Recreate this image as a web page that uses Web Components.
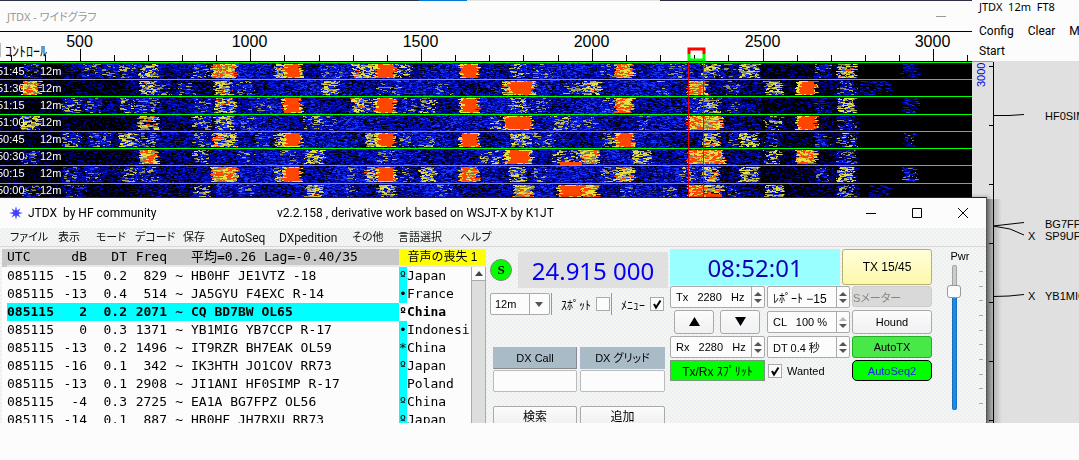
<!DOCTYPE html>
<html lang="ja">
<head>
<meta charset="utf-8">
<title>JTDX</title>
<style>
html, body { margin: 0; background: #fcfcfc; }
body { font-family: "Liberation Sans", "Noto Sans CJK JP", sans-serif; font-size: 12px; color: #000; overflow: hidden; }
</style>
</head>
<body>
<jtdx-desktop>
  <wide-graph></wide-graph>
  <band-map></band-map>
  <main-window>
    <decode-list></decode-list>
    <rig-panel></rig-panel>
    <tx-panel></tx-panel>
    <power-slider></power-slider>
  </main-window>
</jtdx-desktop>

<script>
function define(name, html, ready) {
  const t = document.createElement('template');
  t.innerHTML = html;
  customElements.define(name, class extends HTMLElement {
    constructor() {
      super();
      this.attachShadow({ mode: 'open' }).append(t.content.cloneNode(true));
    }
    connectedCallback() { if (ready) ready(this, this.shadowRoot); }
  });
}

define('jtdx-desktop', `
<style>
:host { display: grid; grid-template-columns: minmax(0, 1fr) 107px; grid-template-rows: 423px; overflow: hidden; }
::slotted(wide-graph) { grid-area: 1 / 1; }
::slotted(band-map) { grid-area: 1 / 2; }
::slotted(main-window) { grid-area: 1 / 1 / 2 / 3; margin: 197px 92px 0 0; z-index: 1; }
</style><slot></slot>`);

/* ---------- wide graph: title, frequency scale, waterfall ---------- */
define('wide-graph', `
<style>
:host { display: block; background: #fcfcfc; overflow: hidden; }
.edge { height: 1px; background: linear-gradient(90deg, #2b3446 419px, #0078d7 419px 467px, #dde5dd 467px 660px, #2d2d48 660px); }
header { display: flex; justify-content: space-between; align-items: center; height: 30px; padding: 0 26px 0 7px; color: #999;
  font: 11px "Noto Sans", "Noto Sans CJK JP", sans-serif; font-feature-settings: "palt"; }
header i { width: 10px; height: 1px; background: #999; }
.scale { position: relative; border-top: 1px solid #000; height: 29px; }
svg { display: block; overflow: hidden; }
button { position: absolute; left: 0; bottom: 4px; border: 0; border-left: 1px solid #bbb; background: none; padding: 0 0 0 4px; font: 14px/14px "Noto Sans CJK JP", sans-serif; color: #000; }
.fall { position: relative; }
canvas { display: block; width: 100%; height: 137px; image-rendering: pixelated; }
ol { position: absolute; inset: 1px 0 0 0; margin: 0; padding: 0; list-style: none; display: grid; grid-template-rows: repeat(8, 17px); color: #fff; overflow: hidden; }
li { display: flex; align-items: center; gap: 15px; font-size: 11px; margin-left: -3px; }
li time { width: 28px; }
</style>
<div class="edge"></div>
<header><span>JTDX - ワイドグラフ</span><i></i></header>
<div class="scale"><button>ｺﾝﾄﾛｰﾙ</button><svg width="972" height="29" viewBox="0 0 972 29" font-size="16" text-anchor="middle"></svg></div>
<div class="fall"><canvas width="972" height="137"></canvas><ol></ol></div>`, (host, root) => {
  const svg = root.querySelector('svg');
  let s = '';
  for (let i = -2; i <= 26; i++) {
    const x = Math.floor(80 + i * 34.15) + 0.5;
    const major = i % 5 === 0;
    s += `<path d="M${x} ${major ? 17 : 23}V29" stroke="#000"/>`;
    if (major) s += `<text x="${x - 1}" y="15">${500 + i * 100}</text>`;
  }
  s += '<path d="M689 22V17H704V22" fill="none" stroke="red" stroke-width="3"/><path d="M689 22V28H704V22" fill="none" stroke="#0f0" stroke-width="3"/>';
  svg.innerHTML = s;
  root.querySelector('ol').innerHTML = ['51:45', '51:30', '51:15', '51:00', '50:45', '50:30', '50:15', '50:00']
    .map(t => `<li><time>${t}</time><span>12m</span></li>`).join('');

  const bands = [
    [25,40,2.6, 83,118,2.8, 120,135,3, 140,157,3.9, 192,208,3.1, 212,236,4.7, 275,283,4, 283,301,6, 323,340,2.8, 352,362,4.3, 360,375,3.7, 375,395,6, 395,410,3.5, 460,478,6, 510,527,3.4, 533,550,2.9, 602,615,3.1, 615,633,5.1, 670,690,2.8, 703,719,3.8, 722,735,2.8, 740,758,3.9, 815,830,2.4, 838,855,4.3, 902,918,1.8],
    [22,40,4.9, 140,157,4, 155,170,3, 178,193,2.9, 214,232,4.2, 238,253,3.1, 322,338,3.9, 378,400,2.8, 435,450,2.8, 503,535,4.2, 508,533,6, 563,580,3.1, 582,600,4.1, 657,670,2.8, 688,706,4.8, 725,740,2.5, 765,782,3.9, 797,816,6, 838,855,2.8, 860,890,1.6],
    [62,80,3.2, 85,100,2.8, 120,133,3.4, 135,157,2.8, 195,208,2.8, 215,235,4.1, 250,270,2.8, 283,301,6, 352,362,4.3, 362,375,3.5, 375,395,6, 405,415,2.8, 420,435,3.4, 460,478,6, 510,528,3.4, 533,550,2.8, 602,615,3, 615,633,5.1, 690,703,3, 703,719,3.9, 728,740,2.5, 815,830,2, 838,855,3.9, 902,918,2],
    [22,40,3.9, 138,157,4.4, 193,210,3.2, 215,232,3.6, 240,255,2.8, 305,323,3.3, 322,335,2.6, 490,505,3.4, 504,532,5.9, 552,570,3.4, 570,580,2.8, 583,597,3, 638,648,2.8, 688,706,5, 703,722,4.5, 765,782,3.3, 797,816,6, 838,855,2.5],
    [63,80,3.2, 90,112,2.9, 120,136,3.6, 140,157,3.1, 193,208,3, 212,236,4.3, 255,270,2.7, 275,283,4, 283,301,6, 366,378,4.2, 376,395,6, 400,412,3, 420,435,3.2, 460,478,6, 511,530,3.7, 533,553,3, 603,615,3.2, 615,633,5.7, 703,719,4.2, 728,740,2.5, 740,758,3.9, 765,780,2.4, 815,830,2.3, 838,855,3.2, 905,915,2.3],
    [22,38,2.8, 140,157,4.7, 193,207,3.5, 238,253,3, 280,296,2.8, 306,323,3.8, 378,395,3, 480,500,3.4, 504,532,4.2, 507,530,6, 552,582,3.5, 582,598,4.6, 633,650,3.9, 688,706,4.9, 703,724,4.9, 765,780,3.4, 797,816,5, 838,855,2.8],
    [65,80,2.9, 85,100,2.8, 122,136,3.5, 140,157,3, 212,237,4.8, 275,283,3.8, 283,301,5.6, 345,356,2.9, 366,376,4, 376,395,5.6, 400,412,2.9, 420,435,3.9, 460,478,4.8, 510,525,3.8, 533,548,2.9, 602,616,3.4, 615,633,4.2, 680,695,3.3, 703,718,4.2, 740,758,3.9, 815,830,2.6, 838,855,3.7, 903,916,2.4],
    [22,40,2.8, 65,85,2.6, 193,208,3.4, 240,255,2.7, 306,323,4.1, 345,355,2.7, 378,395,3.7, 435,450,2.9, 514,532,4.6, 558,582,6, 582,598,5.2, 620,632,3, 663,678,2.8, 688,706,5.2, 703,722,4.3, 728,738,2.6, 765,782,3.8, 838,855,3.1, 870,890,1.7]
  ];
  const lines = [1, 18, 35, 53, 70, 87, 104, 122, 137];
  const ctx = root.querySelector('canvas').getContext('2d');
  let seed = 20231;
  const rnd = () => (seed = (seed * 1664525 + 1013904223) >>> 0) / 4294967296;
  const colour = v => v < 1 ? '#000' : v < 1.7 ? '#000058' : v < 2.4 ? '#0008a4' : v < 3 ? '#0418d8' : v < 3.3 ? '#1c34f4' : v < 3.9 ? '#8c8c6c' : v < 4.3 ? '#c0bc54' : v < 5.1 ? '#e8e03c' : '#ff4600';
  ctx.fillRect(0, 0, 972, 137);
  bands.forEach((row, r) => {
    const odd = r % 2;
    for (let y = lines[r] + 1; y < lines[r + 1]; y++) {
      for (let x = 0; x < 972;) {
        const w = 1 + Math.floor(rnd() * 3);
        const base = x < 62 ? 0.4 : x < 130 ? (odd ? 0.6 : 1.4) : x < 215 ? (odd ? 1.3 : 1.7) : x < 710 ? 2 + 0.3 * Math.sin(x / 17 + r * 2) : x < 760 ? 1.4 : x < 835 ? 0.7 : x < 858 ? 1 : -0.4;
        ctx.fillStyle = colour(Math.min(base + (rnd() - 0.5) * 2.6, 3.2));
        ctx.fillRect(x, y, w, 1);
        x += w;
      }
      if (y === lines[r] + 1 || y === lines[r + 1] - 1) continue;
      const rim = y === lines[r] + 2 || y === lines[r + 1] - 2;
      for (let k = 0; k < row.length; k += 3) {
        const level = row[k + 2];
        const left = row[k], right = row[k + 1];
        const end = right + rnd() * 6 - 3;
        let x = left + Math.round(rnd() * 4 - 2);
        while (x < end) {
          const w = 1 + Math.floor(rnd() * 4);
          const edge = x < left + 2 || x > right - 3;
          let v = level + (rnd() - 0.5) * (level > 5.5 ? 1 : 2.4);
          if (level > 5.5 && (edge || rim) && rnd() < 0.6) v = 4.5;
          const keep = level < 2.5 ? 0.7 : level < 3.6 ? 0.62 : level < 4.5 ? 0.85 : 1;
          if (rnd() < keep) {
            ctx.fillStyle = colour(v);
            ctx.fillRect(x, y, Math.min(w, Math.max(1, end - x)), 1);
          }
          x += w;
        }
      }
    }
  });
  ctx.fillStyle = '#ff4600';
  ctx.fillRect(560, 101, 22, 3);
  ctx.fillRect(706, 133, 16, 4);
  ctx.fillStyle = '#00ff00';
  lines.slice(0, 8).forEach(y => ctx.fillRect(0, y, 972, 1));
  ctx.fillStyle = '#f00000';
  ctx.fillRect(688, 0, 1, 137);
  ctx.fillRect(703, 0, 1, 137);
});

/* ---------- band map ---------- */
define('band-map', `
<style>
:host { display: block; background: #e0e0e0; overflow: hidden; white-space: nowrap; }
header { background: #fcfcfc; height: 61px; padding-left: 7px; font: 12px Roboto, sans-serif; box-sizing: border-box; }
h1 { font: 11px/14px "Noto Sans", sans-serif; margin: 0; padding-bottom: 7px; white-space: pre; }
nav { line-height: 20px; }
nav a { color: inherit; text-decoration: none; margin-right: 14px; }
svg { display: block; }
</style>
<header><h1>JTDX  12m  FT8</h1><nav><a href="#">Config</a><a href="#">Clear</a><a href="#">Mode</a><br><a href="#">Start</a></nav></header>
<svg width="107" height="362" viewBox="0 0 107 362" font-size="11">
  <path d="M0 .5H21" stroke="#999"/>
  <defs><linearGradient id="g"><stop stop-color="#8c8c8c"/><stop offset="1" stop-color="#e0e0e0"/></linearGradient></defs>
  <rect x="14" y="138" width="16" height="224" fill="url(#g)"/>
  <path d="M21.500 1V362M17 5.500h4M17 64.500h4M17 123.500h4M17 182.500h4M17 241.500h4M17 300.500h4M17 359.500h4M21 54.500H37L52 53.500M21 165L52 161.500M21 165L38 168L52 174M21 235.500L37 235L52 233.500" fill="none" stroke="#000"/>
  <text transform="translate(13 26) rotate(-90)" fill="#0000e0">3000</text>
  <text x="73" y="59">HF0SIMP</text><text x="73" y="167">BG7FPZ</text>
  <text x="56" y="179">X</text><text x="73" y="179">SP9UF</text>
  <text x="56" y="239">X</text><text x="73" y="239">YB1MIG</text>
</svg>`);

/* ---------- main window frame ---------- */
define('main-window', `
<style>
:host { display: flex; flex-direction: column; border-top: 1px solid #222; border-right: 1px solid #555; box-shadow: 2px 0 4px #0005;
  background: #eff1f4 conic-gradient(#f5f6ee 25%, #eceff6 0 50%, #f5f6ee 0 75%, #eceff6 0) 0 0 / 4px 4px; }
header { display: flex; align-items: center; height: 30px; background: #fcfcfc; font: 12px Roboto, sans-serif; padding-left: 9px; }
.logo { margin-right: 5px; }
h1 { font: inherit; margin: 0; width: 249px; white-space: pre; }
.ctl { margin-left: auto; display: flex; gap: 22px; padding-right: 11px; }
.ctl button { width: 24px; height: 24px; padding: 0; border: 0; background: none; display: grid; place-items: center; }
nav { display: grid; grid-template-columns: 48px 38px 39px 48px 37px 59px 73px 46px 62px auto; height: 18px; padding: 1px 0 0 10px; box-sizing: border-box; border-bottom: 1px solid #d8d8d8; font: 11px/18px Roboto, "Noto Sans CJK JP", sans-serif; font-feature-settings: "palt"; white-space: nowrap; height: 19px; }
nav a { color: #111; text-decoration: none; }
nav .latin { font-size: 12px; }
main { display: grid; grid-template-columns: minmax(0, 1fr) 180px 262px 52px; column-gap: 2px; padding: 2px 0 0 2px; flex: 1; min-height: 0; }
</style>
<header>
  <svg class="logo" width="14" height="14" viewBox="0 0 14 14"><path d="M7 0L8 4.500L11.500 2.500L9.500 6L14 7L9.500 8L11.500 11.500L8 9.500L7 14L6 9.500L2.500 11.500L4.500 8L0 7L4.500 6L2.500 2.500L6 4.500Z" fill="#4040ff"/></svg>
  <h1>JTDX  by HF community</h1><span>v2.2.158 , derivative work based on WSJT-X by K1JT</span>
  <div class="ctl">
    <button aria-label="最小化"><svg width="12" height="12"><path d="M1 6.500H11" stroke="#000"/></svg></button>
    <button aria-label="最大化"><svg width="12" height="12"><path d="M1.500 1.500H10.500V10.500H1.500Z" fill="none" stroke="#000"/></svg></button>
    <button aria-label="閉じる"><svg width="12" height="12"><path d="M1 1L11 11M11 1L1 11" stroke="#000"/></svg></button>
  </div>
</header>
<nav><a href="#">ファイル</a><a href="#">表示</a><a href="#">モード</a><a href="#">デコード</a><a href="#">保存</a><a href="#" class="latin">AutoSeq</a><a href="#" class="latin">DXpedition</a><a href="#">その他</a><a href="#">言語選択</a><a href="#">ヘルプ</a></nav>
<main><slot></slot></main>`);

/* ---------- decode list ---------- */
define('decode-list', `
<style>
:host { display: block; position: relative; overflow: hidden; padding-left: 5px; background: #fcfcfc; height: 174px; }
table { width: 100%; table-layout: fixed; border-collapse: separate; border-spacing: 0; font: 13px/18px "DejaVu Sans Mono", "Noto Sans CJK JP", monospace; white-space: pre; }
th, td { padding: 0; text-align: right; }
th { font-weight: normal; line-height: 16px; height: 16px; background: #c8c8c8 padding-box; border-bottom: 2px solid #e8e8e8; }
th:first-child { text-align: left; box-shadow: -5px 0 #c8c8c8; }
td.m, th.m, td.c { text-align: left; }
td.f { background: #0ff; text-align: center; }
tr.hot td { background: #0ff; font-weight: bold; }
tr.hot td.f, tr.hot td.c { background: #fcfcfc; }
th.warn { background-color: #ff0; text-align: center; font-family: "Liberation Sans", "Noto Sans CJK JP", sans-serif; font-size: 12px; }
.bar { position: absolute; right: 0; top: 18px; bottom: 0; width: 13px; border: solid #aaa; border-width: 0 1px; background: #dcdedc; }
.bar button { display: grid; place-items: center; width: 13px; height: 14px; padding: 0; border: 0; border-bottom: 1px solid #aaa; background: #fcfcfc; }
</style>
<table>
<colgroup><col style="width:47px"><col style="width:33px"><col style="width:40px"><col style="width:40px"><col style="width:24px"><col><col style="width:8px"><col style="width:79px"></colgroup>
<thead><tr><th>UTC</th><th>dB</th><th>DT</th><th>Freq</th><th></th><th class="m">平均=0.26 Lag=-0.40/35</th><th class="warn" colspan="2">音声の喪失 1</th></tr></thead>
<tbody></tbody></table>
<div class="bar"><button aria-label="上へ"><svg width="8" height="5"><path d="M0 5L4 0L8 5Z" fill="#444"/></svg></button></div>`, (host, root) => {
  const rows = [
    ['-15', '0.2', '829', 'HB0HF JE1VTZ -18', 'º', 'Japan'],
    ['-13', '0.4', '514', 'JA5GYU F4EXC R-14', '•', 'France'],
    ['2', '0.2', '2071', 'CQ BD7BW OL65', 'º', 'China'],
    ['0', '0.3', '1371', 'YB1MIG YB7CCP R-17', '•', 'Indonesi'],
    ['-13', '0.2', '1496', 'IT9RZR BH7EAK OL59', '*', 'China'],
    ['-16', '0.1', '342', 'IK3HTH JO1COV RR73', 'º', 'Japan'],
    ['-13', '0.1', '2908', 'JI1ANI HF0SIMP R-17', '', 'Poland'],
    ['-4', '0.3', '2725', 'EA1A BG7FPZ OL56', 'º', 'China'],
    ['-14', '0.1', '887', 'HB0HF JH7RXU RR73', 'º', 'Japan']
  ];
  root.querySelector('tbody').innerHTML = rows.map(([db, dt, f, msg, mark, c], i) =>
    `<tr${i === 2 ? ' class="hot"' : ''}><td>085115</td><td>${db}</td><td>${dt}</td><td>${f}</td><td>~ </td><td class="m">${msg}</td><td class="f">${mark}</td><td class="c">${c}</td></tr>`).join('');
});

const tick = `input[type=checkbox] { appearance: none; width: 14px; height: 14px; margin: 0; border: 1px solid #aaa; background: #fcfcfc; flex: none; }
input[type=checkbox]:checked { background: #fcfcfc url("data:image/svg+xml,%3Csvg xmlns='http://www.w3.org/2000/svg' width='12' height='12'%3E%3Cpath d='M3 6L5 9.500L9.500 2.500' fill='none' stroke='%23000' stroke-width='2'/%3E%3C/svg%3E"); }`;

/* ---------- band, frequency and DX call ---------- */
define('rig-panel', `
<style>
:host { display: block; padding: 3px 0 0 2px; }
${tick}
.freq { display: flex; align-items: center; gap: 6px; }
.s { width: 22px; height: 22px; padding: 0; border: 1px solid #778877; border-radius: 50%; background: #0f0; color: #000; font: bold 13px/18px "Liberation Serif", serif; }
output { flex: 1; height: 36px; background: #e0e0e0; color: #0000f4; font: 24px/38px "Noto Sans", sans-serif; text-align: center; }
.opts { display: flex; align-items: center; height: 22px; margin: 5px 0 32px; white-space: nowrap; font-family: "Noto Sans CJK JP", sans-serif; }
.combo { position: relative; width: 60px; height: 22px; }
select { appearance: none; width: 60px; height: 22px; border: 1px solid #aaa; border-radius: 2px; padding: 0 0 0 4px; font: 11px "Liberation Sans", sans-serif; color: #000; background: linear-gradient(#aaa, #aaa) 38px 0 / 1px 100% no-repeat, #fcfcfc; }
.combo svg { position: absolute; right: 7px; top: 9px; pointer-events: none; }
label { display: flex; align-items: center; gap: 5px; height: 22px; margin-left: 1px; padding-left: 9px; border-left: 1px solid #999; }
.dx { display: grid; grid-template-columns: 84px 85px; gap: 1px 3px; padding-left: 3px; }
.dx button { height: 22px; padding: 0; border: 1px solid #aaa; border-radius: 2px; background: linear-gradient(#fcfcfc, #eee); font: 12px/18px "Liberation Sans", "Noto Sans CJK JP", sans-serif; font-feature-settings: "palt"; color: #000; }
.dx .head { background: #aabbc8; border-radius: 0; border-color: #aabbc8 #889 #888 #aabbc8; font-size: 11px; }
.dx .gray { border-color: #aabbc8; }
.dx input { box-sizing: border-box; width: 100%; height: 22px; border: 1px solid #bbb; border-radius: 2px; background: #fcfcfc; margin-bottom: 13px; }
</style>
<div class="freq"><button class="s">S</button><output>24.915 000</output></div>
<div class="opts"><div class="combo"><select aria-label="バンド"><option>12m</option></select><svg width="8" height="5"><path d="M0 0H8L4 5Z" fill="#555"/></svg></div>
<label>ｽﾎﾟｯﾄ<input type="checkbox"></label><label>ﾒﾆｭｰ<input type="checkbox" checked></label></div>
<div class="dx"><button class="head">DX Call</button><button class="head gray">DX グリッド</button><input aria-label="DX Call"><input aria-label="DX グリッド"><button>検索</button><button>追加</button></div>`);

/* ---------- spin box ---------- */
define('spin-box', `
<style>
:host { display: flex; box-sizing: border-box; height: 22px; border: 1px solid #aaa; border-radius: 2px; background: #fcfcfc; overflow: hidden; font: 11px "Liberation Sans", "Noto Sans CJK JP", sans-serif; }
input { flex: 1; min-width: 0; border: 0; outline: 0; padding: 0 0 0 5px; background: none; color: #000; font: inherit; }
div { width: 12px; border-left: 1px solid #aaa; display: flex; flex-direction: column; justify-content: center; gap: 3px; }
button { border: 0; padding: 0; background: none; height: 4px; display: grid; place-items: center; }
svg { display: block; }
:host([max]) button:first-child { opacity: .4; }
</style>
<input type="text"><div><button aria-label="増"><svg width="8" height="4"><path d="M0 4L4 0L8 4Z" fill="#555"/></svg></button><button aria-label="減"><svg width="8" height="4"><path d="M0 0H8L4 4Z" fill="#555"/></svg></button></div>`, (host, root) => {
  const input = root.querySelector('input');
  input.value = host.getAttribute('value');
  input.setAttribute('aria-label', host.getAttribute('name'));
});

/* ---------- transmit controls ---------- */
define('tx-panel', `
<style>
:host { display: block; }
${tick}
.top { display: grid; grid-template-columns: 170px 90px; gap: 2px; margin-bottom: 1px; }
output { background: #9ff; color: #1400b4; font: 24px/38px "Noto Sans", sans-serif; text-align: center; height: 36px; }
.grid { display: grid; grid-template-columns: 95px 83px 80px; grid-template-rows: 22px 24px 22px 21px; gap: 2px; }
button { padding: 0; border: 1px solid #aaa; border-radius: 3px; background: linear-gradient(#fcfcfc, #f0f0f2); color: #000; font: 11px "Liberation Sans", "Noto Sans CJK JP", sans-serif; min-width: 0; }
.tx { background: linear-gradient(#ffffd8, #fcf8ac); border-color: #b8b070; font-size: 12px; }
.meter { background: #d9d9d9; border-color: #ccc; color: #808878; text-align: left; height: 21px; font-feature-settings: "palt"; }
.arrows { display: grid; grid-template-columns: 40px 40px; gap: 6px; padding-left: 4px; }
.auto { background: #48e848; border-color: #20b020; }
.seq { background: #0f0; border-color: #000; border-radius: 5px; color: #2020e0; }
.split { background: #0f0; border-color: #779977; border-radius: 0; font-size: 12px; }
label { display: flex; align-items: center; gap: 5px; padding-left: 1px; font-size: 11px; }
spin-box { align-self: center; }
.kana { font-size: 12px; }
</style>
<div class="top"><output>08:52:01</output><button class="tx">TX 15/45</button></div>
<div class="grid">
<spin-box name="Tx" value="Tx   2280   Hz"></spin-box><spin-box class="kana" name="レポート" value="ﾚﾎﾟｰﾄ −15"></spin-box><button class="meter" disabled>Sメーター</button>
<div class="arrows"><button aria-label="上"><svg width="11" height="9"><path d="M0 9L5.500 0L11 9Z"/></svg></button><button aria-label="下"><svg width="11" height="9"><path d="M0 0H11L5.500 9Z"/></svg></button></div><spin-box name="CL" value="CL   100 %" max></spin-box><button>Hound</button>
<spin-box name="Rx" value="Rx   2280   Hz"></spin-box><spin-box name="DT" value="DT 0.4 秒"></spin-box><button class="auto">AutoTX</button>
<button class="split">Tx/Rx ｽﾌﾟﾘｯﾄ</button><label><input type="checkbox" checked>Wanted</label><button class="seq">AutoSeq2</button>
</div>`);

/* ---------- power slider ---------- */
define('power-slider', `
<style>
:host { display: block; }
label { display: block; text-align: center; line-height: 14px; font-size: 11px; }
div { display: flex; justify-content: space-between; padding: 2px 3px 0 13px; }
input { appearance: none; writing-mode: vertical-lr; direction: rtl; width: 14px; height: 145px; margin: 0; background: none; }
input::-webkit-slider-runnable-track { width: 5px; height: 145px; border-radius: 2px; background: linear-gradient(#ccc 26px, #1e8ae8 26px); box-shadow: inset 0 0 0 1px #0003; }
input::-webkit-slider-thumb { appearance: none; width: 14px; height: 13px; margin-left: -5px; box-sizing: border-box; border: 1px solid #999; border-radius: 3px; background: #fcfcfc; }
svg { display: block; }
</style>
<label for="p">Pwr</label>
<div><input id="p" type="range" min="0" max="100" value="85"><svg width="4" height="145" viewBox="0 0 4 145"><path d="M0 6.500h4M0 21.500h4M0 35.500h4M0 50.500h4M0 65.500h4M0 79.500h4M0 94.500h4M0 109.500h4M0 123.500h4M0 138.500h4" stroke="#aaa"/></svg></div>`);
</script>
</body>
</html>
